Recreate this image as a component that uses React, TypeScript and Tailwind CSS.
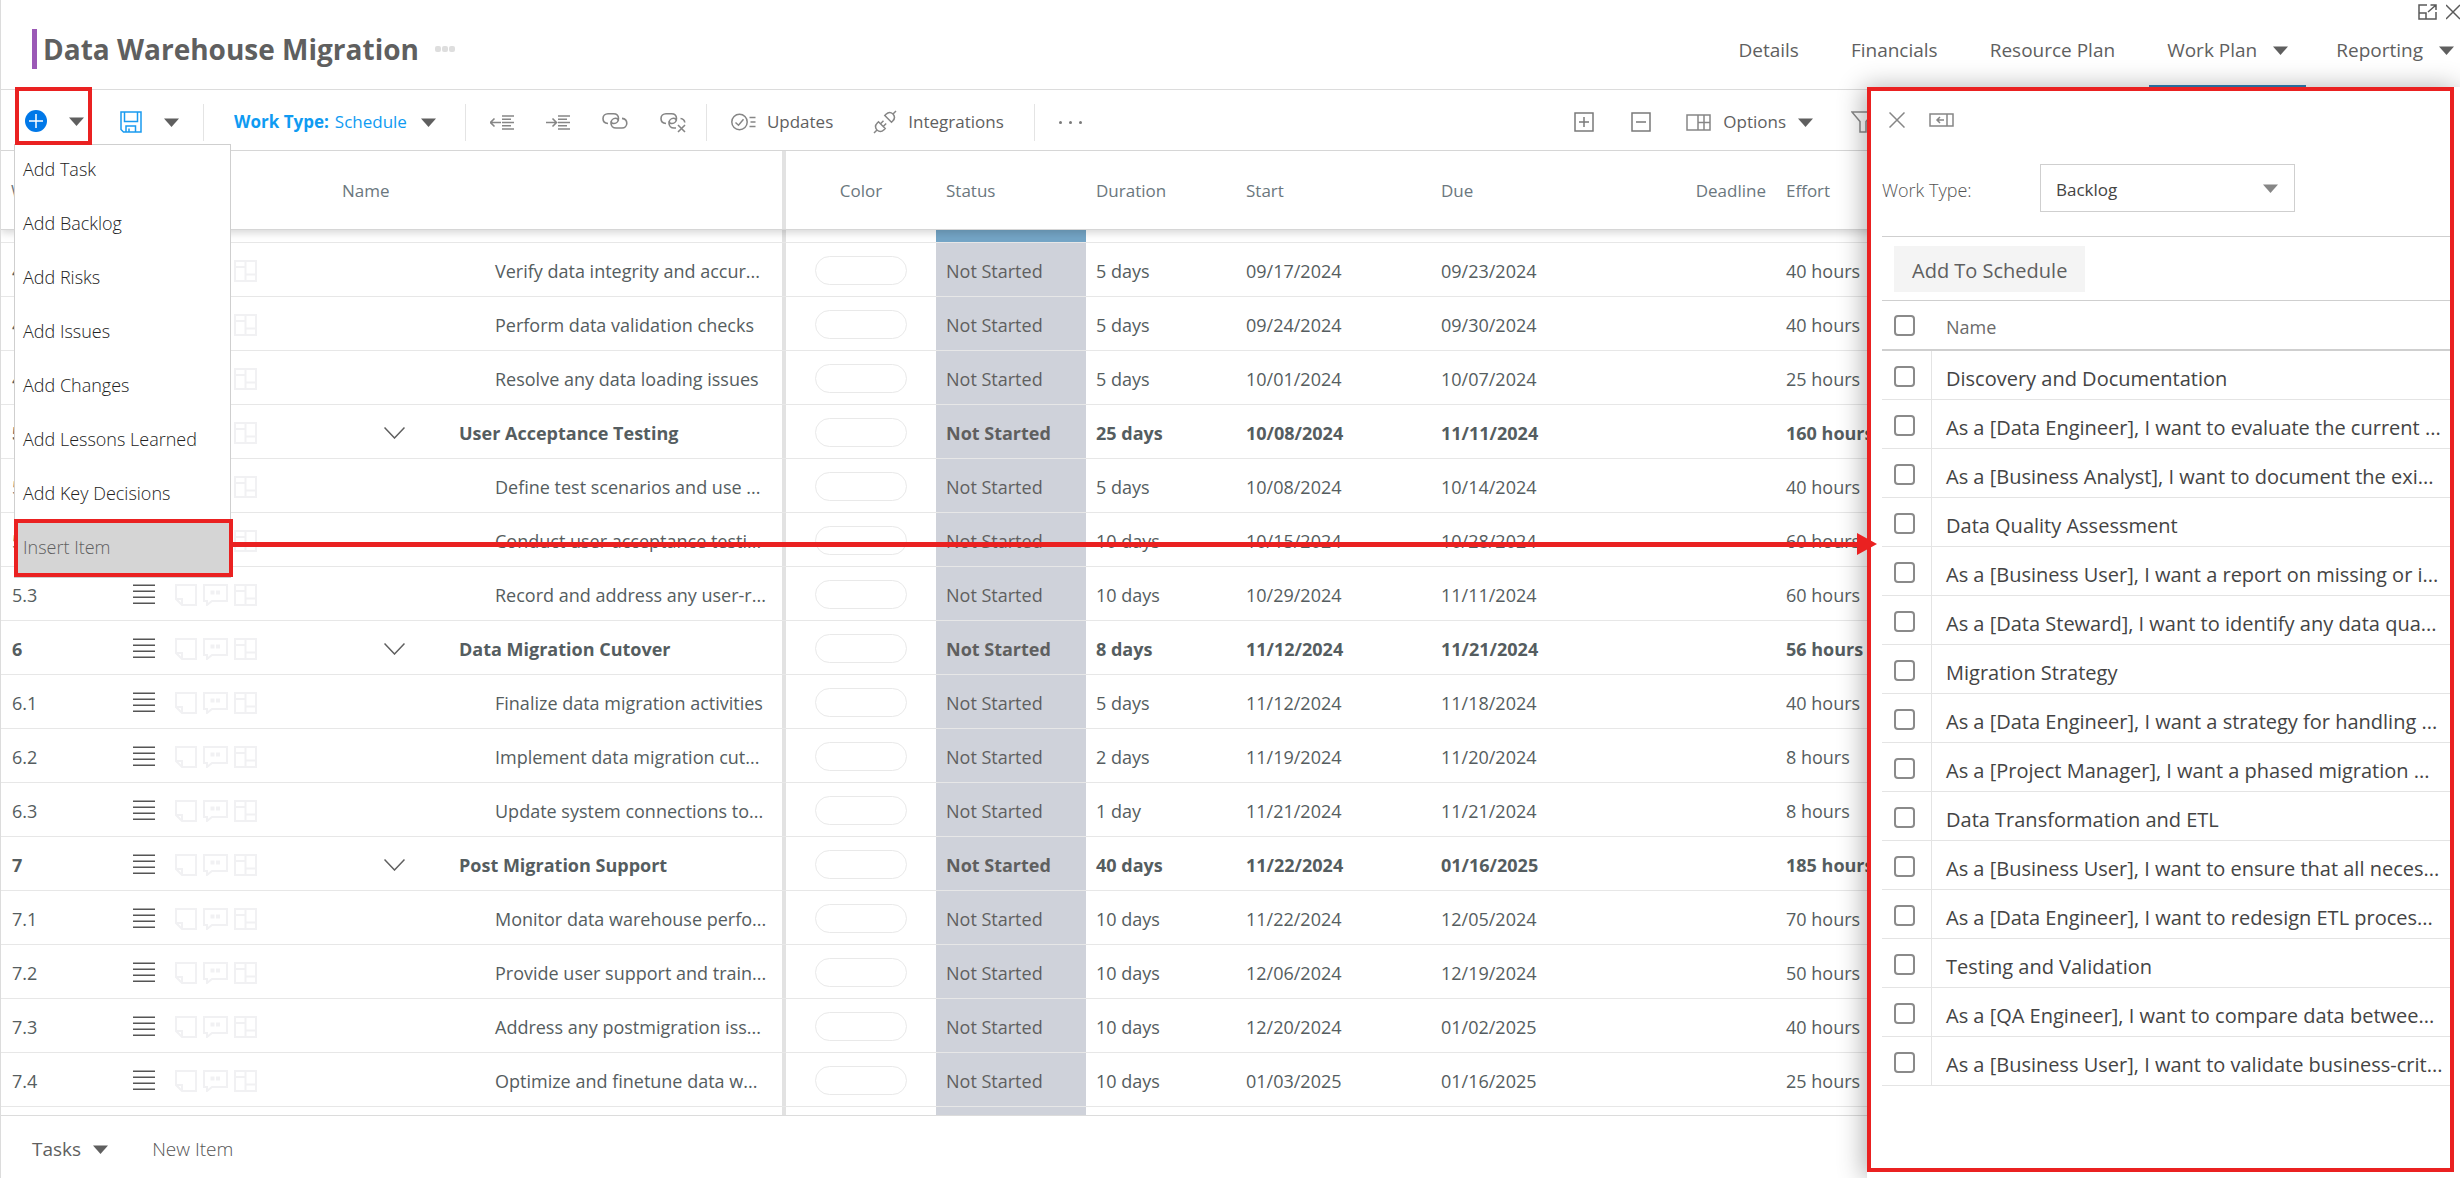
import React from "react";

interface Task {
  wbs: string;
  name: string;
  duration: string;
  start: string;
  due: string;
  effort: string;
  parent?: boolean;
}

const tasks: Task[] = [
  { wbs: "4.4", name: "Verify data integrity and accur...", duration: "5 days", start: "09/17/2024", due: "09/23/2024", effort: "40 hours" },
  { wbs: "4.5", name: "Perform data validation checks", duration: "5 days", start: "09/24/2024", due: "09/30/2024", effort: "40 hours" },
  { wbs: "4.6", name: "Resolve any data loading issues", duration: "5 days", start: "10/01/2024", due: "10/07/2024", effort: "25 hours" },
  { wbs: "5", name: "User Acceptance Testing", duration: "25 days", start: "10/08/2024", due: "11/11/2024", effort: "160 hours", parent: true },
  { wbs: "5.1", name: "Define test scenarios and use ...", duration: "5 days", start: "10/08/2024", due: "10/14/2024", effort: "40 hours" },
  { wbs: "5.2", name: "Conduct user acceptance testi...", duration: "10 days", start: "10/15/2024", due: "10/28/2024", effort: "60 hours" },
  { wbs: "5.3", name: "Record and address any user-r...", duration: "10 days", start: "10/29/2024", due: "11/11/2024", effort: "60 hours" },
  { wbs: "6", name: "Data Migration Cutover", duration: "8 days", start: "11/12/2024", due: "11/21/2024", effort: "56 hours", parent: true },
  { wbs: "6.1", name: "Finalize data migration activities", duration: "5 days", start: "11/12/2024", due: "11/18/2024", effort: "40 hours" },
  { wbs: "6.2", name: "Implement data migration cut...", duration: "2 days", start: "11/19/2024", due: "11/20/2024", effort: "8 hours" },
  { wbs: "6.3", name: "Update system connections to...", duration: "1 day", start: "11/21/2024", due: "11/21/2024", effort: "8 hours" },
  { wbs: "7", name: "Post Migration Support", duration: "40 days", start: "11/22/2024", due: "01/16/2025", effort: "185 hours", parent: true },
  { wbs: "7.1", name: "Monitor data warehouse perfo...", duration: "10 days", start: "11/22/2024", due: "12/05/2024", effort: "70 hours" },
  { wbs: "7.2", name: "Provide user support and train...", duration: "10 days", start: "12/06/2024", due: "12/19/2024", effort: "50 hours" },
  { wbs: "7.3", name: "Address any postmigration iss...", duration: "10 days", start: "12/20/2024", due: "01/02/2025", effort: "40 hours" },
  { wbs: "7.4", name: "Optimize and finetune data w...", duration: "10 days", start: "01/03/2025", due: "01/16/2025", effort: "25 hours" },
];

const menuItems = [
  "Add Task",
  "Add Backlog",
  "Add Risks",
  "Add Issues",
  "Add Changes",
  "Add Lessons Learned",
  "Add Key Decisions",
];

const backlog = [
  "Discovery and Documentation",
  "As a [Data Engineer], I want to evaluate the current ...",
  "As a [Business Analyst], I want to document the exi...",
  "Data Quality Assessment",
  "As a [Business User], I want a report on missing or i...",
  "As a [Data Steward], I want to identify any data qua...",
  "Migration Strategy",
  "As a [Data Engineer], I want a strategy for handling ...",
  "As a [Project Manager], I want a phased migration ...",
  "Data Transformation and ETL",
  "As a [Business User], I want to ensure that all neces...",
  "As a [Data Engineer], I want to redesign ETL proces...",
  "Testing and Validation",
  "As a [QA Engineer], I want to compare data betwee...",
  "As a [Business User], I want to validate business-crit...",
];

function Caret({ className = "text-[#5f5f5f]" }: { className?: string }) {
  return (
    <svg className={`shrink-0 ${className}`} width="15" height="9" viewBox="0 0 15 9" fill="currentColor">
      <path d="M0 0.5h15L7.5 9z" />
    </svg>
  );
}

function Separator() {
  return <div className="h-[37px] w-px shrink-0 bg-[#e4e4e4]" />;
}

function PlusCircleIcon() {
  return (
    <svg width="22" height="22" viewBox="0 0 22 22">
      <circle cx="11" cy="11" r="11" fill="#0078e8" />
      <path d="M11 4v14M4 11h14" stroke="#fff" strokeWidth="1.5" />
    </svg>
  );
}

function SaveIcon() {
  return (
    <svg width="22" height="22" viewBox="0 0 22 22" fill="none" stroke="#1a9bf0" strokeWidth="1.5">
      <path d="M1 1h20v20H3.5L1 18.5z" />
      <path d="M4.5 1v9.5h13V1M6 21v-6h9.5v6M9 21v-3.5" />
    </svg>
  );
}

// arrow beside a block of text lines, used for outdent and indent
function IndentIcon({ right = false }: { right?: boolean }) {
  return (
    <svg width="24" height="15" viewBox="0 0 24 15" fill="none" stroke="#868686" strokeWidth="1.6">
      <path d={right ? "M0 7.5h10M6.5 3.5l4 4-4 4" : "M1 7.5h10M4.5 3.5l-4 4 4 4"} />
      <path d="M12 1h12M12 4.2h9M12 7.5h12M12 10.8h9M12 14h12" />
    </svg>
  );
}

function LinkIcon({ broken = false }: { broken?: boolean }) {
  return (
    <svg width="26" height="22" viewBox="0 0 26 22" fill="none" stroke="#868686" strokeWidth="1.6">
      <path d="M6 12.5C3 12.3 1 10.3 1 7.5S3.2 2.7 6 2.7h5.5c3 0 5 2 5 4.8s-2 5-4.5 5c-1.7 0-2.8-1-2.8-2.3" />
      {broken ? (
        <>
          <path d="M16 17h-2c-3 0-5-2-5-4.7s2-5 4.6-5c1.5 0 2.6.9 2.8 2.2M20.5 7.5c2.4.3 4 1.8 4.3 4" />
          <path d="M18 14l7 7M25 14l-7 7" />
        </>
      ) : (
        <path d="M20 7.4c2.900.3 4.800 2.200 4.800 4.900S22.700 17 20 17h-6c-3 0-5-2-5-4.700s2-5 4.600-5c1.500 0 2.600.9 2.800 2.200" />
      )}
    </svg>
  );
}

function UpdatesIcon() {
  return (
    <svg width="25" height="18" viewBox="0 0 25 18" fill="none" stroke="#868686" strokeWidth="1.5">
      <circle cx="8.5" cy="9" r="7.7" />
      <path d="M4.5 9.5l3 2.7 5-6M18.5 4.5h6M19.5 9h5M18.5 13.5h6" />
    </svg>
  );
}

function PlugIcon() {
  return (
    <svg width="24" height="24" viewBox="0 0 24 24" fill="none" stroke="#868686" strokeWidth="1.5">
      <path d="M1 23l3-3M4 20c-2-2.3-1.7-5 .3-7l1.2-1.2 6.7 6.7L11 19.7c-2 2-4.8 2.3-7 .3z" />
      <path d="M7.5 13.8l3-3M10.2 16.5l3-3" />
      <path d="M23 1l-3 3M20 4c2 2.3 1.7 5-.3 7l-1.2 1.2-6.7-6.7L13 4.3c2-2 4.8-2.3 7-.3z" />
    </svg>
  );
}

function BoxIcon({ plus = false }: { plus?: boolean }) {
  return (
    <svg width="20" height="20" viewBox="0 0 20 20" fill="none" stroke="#7a7a7a" strokeWidth="1.5">
      <path d="M1 1h18v18H1zM5 10h10" />
      {plus && <path d="M10 5v10" />}
    </svg>
  );
}

function ColumnsIcon() {
  return (
    <svg width="25" height="17" viewBox="0 0 25 17" fill="none" stroke="#868686" strokeWidth="1.5">
      <path d="M1 1h23v15H1zM12 1v15M18 1v15M12 8.5h12" />
    </svg>
  );
}

function GripIcon() {
  return (
    <svg width="22" height="21" viewBox="0 0 22 21" fill="none" stroke="#555" strokeWidth="1.5">
      <path d="M0 1.25h22M0 7.25h22M0 13.25h22M0 19.25h22" />
    </svg>
  );
}

function RowIcons() {
  return (
    <div className="flex gap-1.5">
      <svg width="22" height="22" viewBox="0 0 22 22" fill="none" stroke="#f1f1f3" strokeWidth="2">
        <path d="M1 1h20v20H7l-6-6zM1 15h6v6" />
      </svg>
      <svg width="25" height="22" viewBox="0 0 25 22" fill="none" stroke="#f1f1f3" strokeWidth="2">
        <path d="M1 1h23v16H9l-5 4v-4H1z" />
        <path d="M9.5 6.5v4M15 6.5v4" strokeWidth="4" />
      </svg>
      <svg width="23" height="22" viewBox="0 0 23 22" fill="none" stroke="#f1f1f3" strokeWidth="2">
        <path d="M1 1h21v20H1zM11.5 1v20M1 7h10.5M11.5 14.5H22" />
      </svg>
    </div>
  );
}

function Header() {
  return (
    <header className="flex h-[90px] shrink-0 items-center justify-between border-b border-[#dcdcdc] pl-[31px]">
      <div className="flex items-center pt-2">
        <div className="h-10 w-[5px] bg-[#9b59b6]" />
        <h1 className="pl-1.5 text-[28px] leading-10 font-bold text-[#5f5f5f]">Data Warehouse Migration</h1>
        <button aria-label="More" className="ml-4 flex gap-px">
          <span className="size-1.5 rounded-xs bg-[#dedede]" />
          <span className="size-1.5 rounded-xs bg-[#dedede]" />
          <span className="size-1.5 rounded-xs bg-[#dedede]" />
        </button>
      </div>
      <nav className="flex h-full items-end text-[19px] text-[#5f5f5f]">
        <a href="#details" className="flex h-[78px] items-center px-[26px]">Details</a>
        <a href="#financials" className="flex h-[78px] items-center px-[26px]">Financials</a>
        <a href="#resource-plan" className="flex h-[78px] items-center pr-[34px] pl-[26px]">Resource Plan</a>
        <a href="#work-plan" className="flex h-[78px] items-center gap-4 border-b-4 border-[#2f7fb5] px-[18px] pt-1">
          Work Plan
          <Caret />
        </a>
        <a href="#reporting" className="flex h-[78px] items-center gap-4 pr-1.5 pl-[30px]">
          Reporting
          <Caret />
        </a>
      </nav>
      <div className="absolute top-1 right-0 flex gap-2">
        <button aria-label="Open in new window">
          <svg width="20" height="16" viewBox="0 0 20 16" fill="none" stroke="#5a5a5a" strokeWidth="1.5">
            <path d="M9 1H1v14h17V8M1 9h7v6M10 8l8-7M12.5 1H18v5" />
          </svg>
        </button>
        <button aria-label="Close">
          <svg width="14" height="16" viewBox="0 0 14 16" fill="none" stroke="#5a5a5a" strokeWidth="1.5">
            <path d="M0 1l14 14M14 1L0 15" />
          </svg>
        </button>
      </div>
    </header>
  );
}

function AddMenu() {
  return (
    <div className="absolute top-[54px] left-[13px] z-20 w-[217px] border border-[#cfcfcf] bg-white text-lg font-light text-[#222]">
      {menuItems.map((item) => (
        <button key={item} className="flex h-[54px] w-full items-center pb-1.5 pl-2">
          {item}
        </button>
      ))}
      <button className="-mt-1 -ml-px flex h-[58px] w-[219px] items-center border-4 border-[#ea2121] bg-[#d5d5d5] pb-0.5 pl-[5px] text-[#5f5f5f]">
        Insert Item
      </button>
    </div>
  );
}

function Toolbar() {
  return (
    <div className="relative flex h-[61px] shrink-0 items-center border-b border-[#d6d6d6] pt-1 text-[17px] text-[#5f5f5f]">
      <div className="absolute -top-[3px] left-[14px] z-30 flex h-[58px] w-[77px] items-center gap-[22px] border-4 border-[#ea2121] bg-white pt-2.5 pl-1.5">
        <button aria-label="Add">
          <PlusCircleIcon />
        </button>
        <button aria-label="Add options">
          <Caret />
        </button>
      </div>
      <AddMenu />
      <div className="ml-[119px] flex items-center">
        <button aria-label="Save">
          <SaveIcon />
        </button>
        <button aria-label="Save options" className="ml-[22px]">
          <Caret />
        </button>
      </div>
      <div className="ml-6 flex items-center">
        <Separator />
        <button className="ml-[30px] flex items-center gap-1.5 text-[#0f9bf2]">
          <span className="font-bold">Work Type:</span>
          <span>Schedule</span>
          <span className="pl-2">
            <Caret />
          </span>
        </button>
      </div>
      <div className="ml-[29px] flex items-center">
        <Separator />
        <button aria-label="Outdent" className="ml-6">
          <IndentIcon />
        </button>
        <button aria-label="Indent" className="ml-8">
          <IndentIcon right />
        </button>
        <button aria-label="Link" className="ml-8">
          <LinkIcon />
        </button>
        <button aria-label="Unlink" className="ml-8">
          <LinkIcon broken />
        </button>
      </div>
      <div className="ml-5 flex items-center">
        <Separator />
        <button className="ml-6 flex items-center gap-[11px]">
          <UpdatesIcon />
          Updates
        </button>
        <button className="ml-10 flex items-center gap-[11px]">
          <PlugIcon />
          Integrations
        </button>
      </div>
      <div className="ml-[30px] flex items-center">
        <Separator />
        <button aria-label="More actions" className="ml-6 flex gap-[7px]">
          <span className="size-[3px] rounded-full bg-[#7a7a7a]" />
          <span className="size-[3px] rounded-full bg-[#7a7a7a]" />
          <span className="size-[3px] rounded-full bg-[#7a7a7a]" />
        </button>
      </div>
      <div className="mr-[585px] ml-auto flex items-center">
        <button aria-label="Expand all">
          <BoxIcon plus />
        </button>
        <button aria-label="Collapse all" className="ml-[37px]">
          <BoxIcon />
        </button>
        <button className="ml-[35px] flex items-center gap-3">
          <ColumnsIcon />
          <span>Options</span>
          <Caret />
        </button>
        <button aria-label="Filter" className="ml-[38px]">
          <svg width="24" height="22" viewBox="0 0 24 22" fill="none" stroke="#8a8a8a" strokeWidth="1.5">
            <path d="M1 1h22l-8 9.5V21H9V10.5z" />
          </svg>
        </button>
      </div>
    </div>
  );
}

function TaskTable() {
  return (
    <div className="min-h-0 flex-1 overflow-hidden">
      <table className="w-full table-fixed border-separate border-spacing-0 text-lg text-[#555d60]">
        <colgroup>
          <col className="w-[132px]" />
          <col className="w-[42px]" />
          <col className="w-[157px]" />
          <col className="w-[450px]" />
          <col className="w-[4px]" />
          <col className="w-[150px]" />
          <col className="w-[150px]" />
          <col className="w-[150px]" />
          <col className="w-[195px]" />
          <col className="w-[195px]" />
          <col className="w-[150px]" />
          <col />
        </colgroup>
        <thead className="relative z-10 bg-white text-left text-[17px] text-[#6b777e] shadow-[0_3px_8px_rgba(0,0,0,0.16)] [&_th]:border-b [&_th]:border-[#d6d6d6] [&_th]:p-0 [&_th]:pt-[3px] [&_th]:font-normal">
          <tr className="h-[79px]">
            <th>
              <span className="pl-2.5">WBS</span>
            </th>
            <th></th>
            <th></th>
            <th>
              <span className="pl-2.5">Name</span>
            </th>
            <th className="bg-[#e2e2e2]"></th>
            <th className="text-center">Color</th>
            <th>
              <span className="pl-2.5">Status</span>
            </th>
            <th>
              <span className="pl-2.5">Duration</span>
            </th>
            <th>
              <span className="pl-2.5">Start</span>
            </th>
            <th>
              <span className="pl-2.5">Due</span>
            </th>
            <th className="text-right">
              <span className="pr-2.5">Deadline</span>
            </th>
            <th>
              <span className="pl-2.5">Effort</span>
            </th>
          </tr>
        </thead>
        <tbody className="[&_td]:border-b [&_td]:border-[#e7e7e7] [&_td]:p-0 [&_td]:pt-0.5">
          <tr className="h-[13px]">
            <td colSpan={4}></td>
            <td className="bg-[#e2e2e2]"></td>
            <td></td>
            <td className="bg-[#74a5c6]"></td>
            <td colSpan={5}></td>
          </tr>
          {tasks.map((task) => (
            <tr key={task.wbs} className={task.parent ? "h-[54px] font-bold" : "h-[54px]"}>
              <td>
                <span className="pl-[11px]">{task.wbs}</span>
              </td>
              <td>
                <GripIcon />
              </td>
              <td>
                <RowIcons />
              </td>
              <td>
                {task.parent ? (
                  <div className="flex items-center gap-[54px] pl-[52px]">
                    <svg width="21" height="12" viewBox="0 0 21 12" fill="none" stroke="#5f5f5f" strokeWidth="1.5">
                      <path d="M0.5 0.5l10 10.5 10-10.5" />
                    </svg>
                    {task.name}
                  </div>
                ) : (
                  <div className="truncate pl-[163px]">{task.name}</div>
                )}
              </td>
              <td className="bg-[#e2e2e2]"></td>
              <td>
                <div className="mx-auto h-[29px] w-[92px] rounded-full border border-[#e9e9e9]" />
              </td>
              <td className="bg-[#cfd2da] text-[#5f5f5f]">
                <span className="pl-2.5">Not Started</span>
              </td>
              <td>
                <span className="pl-2.5">{task.duration}</span>
              </td>
              <td>
                <span className="pl-2.5">{task.start}</span>
              </td>
              <td>
                <span className="pl-2.5">{task.due}</span>
              </td>
              <td></td>
              <td>
                <span className="pl-2.5">{task.effort}</span>
              </td>
            </tr>
          ))}
          <tr className="h-[54px]">
            <td colSpan={4}></td>
            <td className="bg-[#e2e2e2]"></td>
            <td></td>
            <td className="bg-[#cfd2da]"></td>
            <td colSpan={5}></td>
          </tr>
        </tbody>
      </table>
    </div>
  );
}

function Checkbox({ label }: { label: string }) {
  return (
    <input
      type="checkbox"
      aria-label={label}
      className="mx-auto block size-[21px] appearance-none rounded border-2 border-[#8a8a8a] bg-white"
    />
  );
}

function BacklogPanel() {
  return (
    <aside className="absolute top-[87px] right-0 bottom-0 z-40 w-[593px] bg-white pr-1.5 pb-1.5 shadow-[-4px_0_24px_rgba(0,0,0,0.3)]">
      <div className="flex h-full flex-col border-4 border-[#ea2121] pl-[11px]">
        <div className="flex items-center gap-6 pt-[21px] pl-[7px]">
          <button aria-label="Close panel">
            <svg width="16" height="16" viewBox="0 0 16 16" fill="none" stroke="#868686" strokeWidth="1.5">
              <path d="M0.5 0.5l15 15M15.5 0.5l-15 15" />
            </svg>
          </button>
          <button aria-label="Dock panel">
            <svg width="25" height="14" viewBox="0 0 25 14" fill="none" stroke="#868686" strokeWidth="1.5">
              <path d="M1 1h23v12H1zM18 1v12M8 7h7M11 4L8 7l3 3" />
            </svg>
          </button>
        </div>
        <div className="mt-9 flex items-center">
          <label htmlFor="work-type" className="w-[158px] pt-1 text-lg font-light text-[#555]">
            Work Type:
          </label>
          <div className="relative w-[255px]">
            <select id="work-type" className="h-12 w-full appearance-none border border-[#cfcfcf] bg-white pt-1 pl-[15px] text-[17px] text-[#444]">
              <option>Backlog</option>
              <option>Risks</option>
              <option>Issues</option>
            </select>
            <span className="pointer-events-none absolute top-5 right-[17px]">
              <Caret className="text-[#868686]" />
            </span>
          </div>
        </div>
        <div className="mt-6 border-t border-[#cfcfcf] pt-[9px] pb-2 pl-3">
          <button className="h-[46px] bg-[#f4f4f4] px-[18px] pt-1 text-xl text-[#5f5f5f]">Add To Schedule</button>
        </div>
        <table className="w-full table-fixed border-separate border-spacing-0 border-t border-[#cfcfcf] text-left">
          <colgroup>
            <col className="w-[50px]" />
            <col />
          </colgroup>
          <thead>
            <tr className="h-[50px] text-lg text-[#6b6b6b]">
              <th className="border-b-2 border-[#cfcfcf] p-0 pr-[5px]">
                <Checkbox label="Select all" />
              </th>
              <th className="border-b-2 border-[#cfcfcf] p-0 pt-1 pl-3.5 font-normal">Name</th>
            </tr>
          </thead>
          <tbody>
            {backlog.map((item) => (
              <tr key={item} className="h-[49px] text-xl text-[#444]">
                <td className="border-r border-b border-[#e4e4e4] p-0 pt-0.5 pr-[5px]">
                  <Checkbox label={item} />
                </td>
                <td className="truncate border-b border-[#e4e4e4] p-0 pt-2 pl-3.5">{item}</td>
              </tr>
            ))}
          </tbody>
        </table>
      </div>
    </aside>
  );
}

function CalloutArrow() {
  return (
    <div className="pointer-events-none absolute top-[533px] right-[583px] left-[232px] z-50 flex items-center">
      <div className="h-[5px] flex-1 bg-[#ea2121]" />
      <svg width="20" height="22" viewBox="0 0 20 22" fill="#ea2121">
        <path d="M0 0l20 11L0 22z" />
      </svg>
    </div>
  );
}

export default function App() {
  return (
    <div className="relative flex h-screen flex-col overflow-hidden border-l border-[#dcdcdc] bg-white font-['Open_Sans',sans-serif]">
      <Header />
      <Toolbar />
      <TaskTable />
      <footer className="flex h-[63px] shrink-0 items-center border-t border-[#dcdcdc] pt-1 pl-[31px]">
        <button className="flex items-center gap-3 text-[19px] text-[#5f5f5f]">
          Tasks
          <Caret />
        </button>
        <button className="ml-11 text-[19px] font-light text-[#555]">New Item</button>
      </footer>
      <BacklogPanel />
      <CalloutArrow />
    </div>
  );
}
